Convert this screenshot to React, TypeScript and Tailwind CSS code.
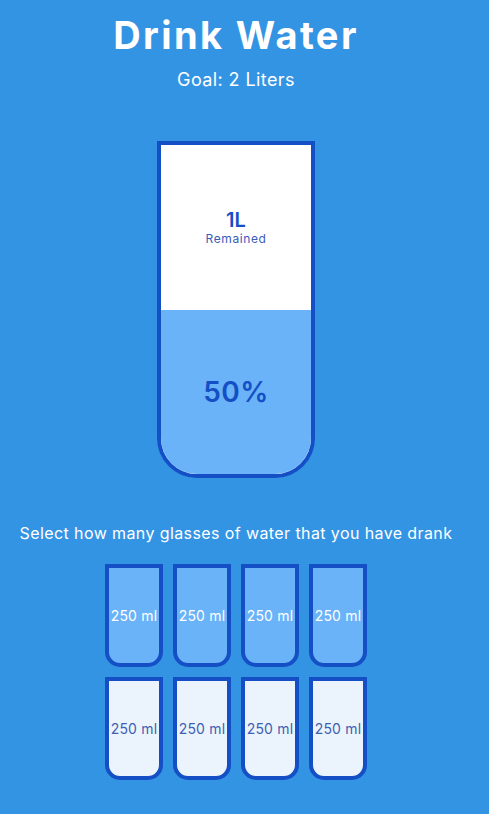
import { useState } from "react";

const TOTAL = 8;

export default function App() {
  const [filled, setFilled] = useState(4);

  const pct = (filled / TOTAL) * 100;
  const remainedL = 2 - (250 * filled) / 1000;

  const clickCup = (i: number) => {
    // clicking the last full cup empties it again
    if (i === filled - 1) setFilled(i);
    else setFilled(i + 1);
  };

  return (
    <main className="min-h-screen bg-[#3494e4] text-white font-['Inter',sans-serif]">
      <div className="w-[472px] flex flex-col items-center">
        <h1 className="mt-[15px] text-[38px] leading-[40px] font-bold tracking-[2.4px]">Drink Water</h1>
        <h3 className="mt-[13px] text-[18px] leading-[24px] font-normal tracking-[0.4px]">Goal: 2 Liters</h3>

        <div className="mt-[49px] w-[158px] h-[337px] bg-white border-4 border-[#144fc6] rounded-b-[40px] text-[#144fc6] flex flex-col overflow-hidden">
          {remainedL > 0 && (
            <div className="flex-1 flex flex-col items-center justify-center text-center">
              <span className="text-[20px] leading-[24px] font-semibold">{remainedL}L</span>
              <small className="text-[12px] leading-[14px] tracking-[0.6px] text-[#3a5bb8]">Remained</small>
            </div>
          )}
          {filled > 0 && (
            <div
              className="bg-[#6ab3f8] flex items-center justify-center text-[28px] font-semibold tracking-[0.5px]"
              style={{ height: `${pct}%` }}
            >
              {pct}%
            </div>
          )}
        </div>

        <p className="mt-[45px] text-[16px] leading-[20px] tracking-[0.4px] text-center whitespace-nowrap">
          Select how many glasses of water that you have drank
        </p>

        <div className="mt-[16px] w-[280px] flex flex-wrap justify-center">
          {Array.from({ length: TOTAL }).map((_, i) => (
            <button
              key={i}
              onClick={() => clickCup(i)}
              className={
                i < filled
                  ? "m-[5px] w-[58px] h-[103px] border-4 border-[#144fc6] rounded-b-[15px] bg-[#6ab3f8] text-white text-[14px] tracking-[0.2px] whitespace-nowrap flex items-center justify-center cursor-pointer"
                  : "m-[5px] w-[58px] h-[103px] border-4 border-[#144fc6] rounded-b-[15px] bg-[#ebf4fc] text-[#3f5fb5] text-[14px] tracking-[0.2px] whitespace-nowrap flex items-center justify-center cursor-pointer"
              }
            >
              250 ml
            </button>
          ))}
        </div>
      </div>
    </main>
  );
}
